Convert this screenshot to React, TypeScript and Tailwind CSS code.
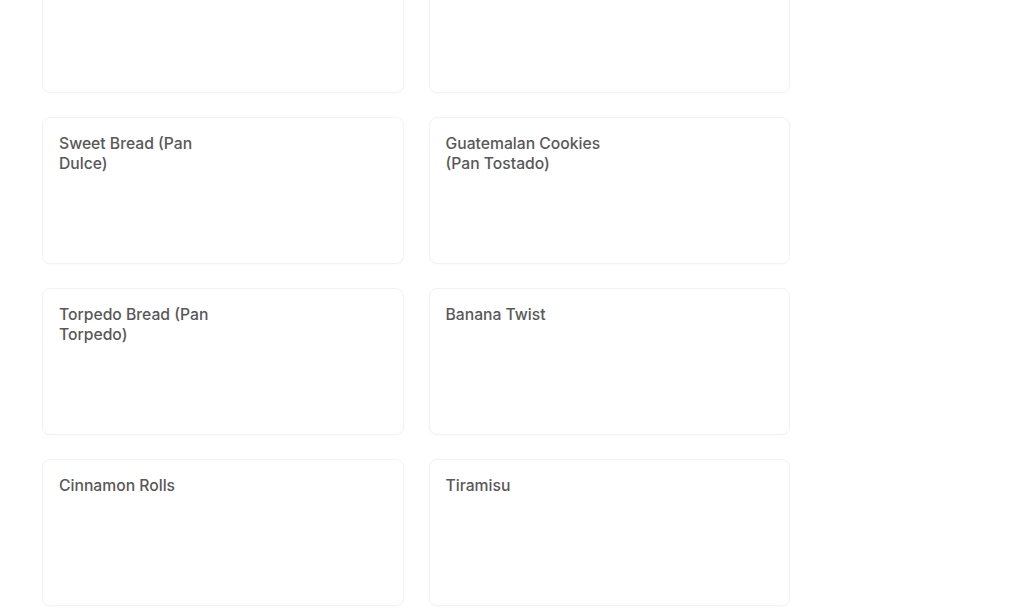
import React from "react";

const items = [
  "",
  "",
  "Sweet Bread (Pan Dulce)",
  "Guatemalan Cookies (Pan Tostado)",
  "Torpedo Bread (Pan Torpedo)",
  "Banana Twist",
  "Cinnamon Rolls",
  "Tiramisu",
];

function ProductCard({ title }: { title: string }) {
  return (
    <div className="h-[147px] rounded-lg border border-[#f3f3f3] bg-white pr-4 pl-4 pt-[16px] shadow-[0_1px_2px_rgba(0,0,0,0.02)]">
      <div className="w-1/2 text-[15.7px] leading-5 font-medium text-[#585858]">{title}</div>
    </div>
  );
}

export default function App() {
  return (
    <div className="h-[615px] overflow-hidden bg-white" style={{ fontFamily: "Inter, 'Noto Sans', sans-serif" }}>
      <div className="-mt-[54px] pl-[42px]">
        <div className="grid w-[748px] grid-cols-2 gap-x-[25px] gap-y-[24px]">
          {items.map((title, index) => (
            <ProductCard key={index} title={title} />
          ))}
        </div>
      </div>
    </div>
  );
}
